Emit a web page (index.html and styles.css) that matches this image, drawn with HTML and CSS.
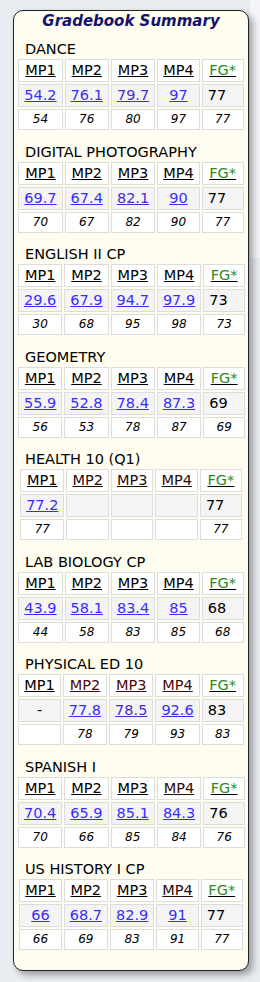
FILE: index.html
```html
<!DOCTYPE html>
<html>
<head>
<meta charset="utf-8">
<title>Gradebook Summary</title>
<link rel="stylesheet" href="styles.css">
</head>
<body>
<div class="card">
  <div class="title">Gradebook Summary</div>

  <div class="course">
    <div class="cname">DANCE</div>
    <table class="grades">
      <tr class="hdr"><td><a>MP1</a></td><td><a>MP2</a></td><td><a>MP3</a></td><td><a>MP4</a></td><td class="fgc"><a class="fg">FG*</a></td></tr>
      <tr class="pct"><td><a>54.2</a></td><td><a>76.1</a></td><td><a class="vis">79.7</a></td><td><a>97</a></td><td class="final">77</td></tr>
      <tr class="rnd"><td>54</td><td>76</td><td>80</td><td>97</td><td>77</td></tr>
    </table>
  </div>

  <div class="course">
    <div class="cname">DIGITAL PHOTOGRAPHY</div>
    <table class="grades">
      <tr class="hdr"><td><a>MP1</a></td><td><a>MP2</a></td><td><a>MP3</a></td><td><a>MP4</a></td><td class="fgc"><a class="fg">FG*</a></td></tr>
      <tr class="pct"><td><a>69.7</a></td><td><a>67.4</a></td><td><a class="vis">82.1</a></td><td><a>90</a></td><td class="final">77</td></tr>
      <tr class="rnd"><td>70</td><td>67</td><td>82</td><td>90</td><td>77</td></tr>
    </table>
  </div>

  <div class="course">
    <div class="cname">ENGLISH II CP</div>
    <table class="grades">
      <tr class="hdr"><td><a>MP1</a></td><td><a>MP2</a></td><td><a>MP3</a></td><td><a>MP4</a></td><td class="fgc"><a class="fg">FG*</a></td></tr>
      <tr class="pct"><td><a>29.6</a></td><td><a>67.9</a></td><td><a>94.7</a></td><td><a>97.9</a></td><td class="final">73</td></tr>
      <tr class="rnd"><td>30</td><td>68</td><td>95</td><td>98</td><td>73</td></tr>
    </table>
  </div>

  <div class="course">
    <div class="cname">GEOMETRY</div>
    <table class="grades">
      <tr class="hdr"><td><a>MP1</a></td><td><a>MP2</a></td><td><a>MP3</a></td><td><a>MP4</a></td><td class="fgc"><a class="fg">FG*</a></td></tr>
      <tr class="pct"><td><a>55.9</a></td><td><a>52.8</a></td><td><a>78.4</a></td><td><a>87.3</a></td><td class="final">69</td></tr>
      <tr class="rnd"><td>56</td><td>53</td><td>78</td><td>87</td><td>69</td></tr>
    </table>
  </div>

  <div class="course">
    <div class="cname">HEALTH 10 (Q1)</div>
    <table class="grades">
      <tr class="hdr"><td><a>MP1</a></td><td><a class="dim">MP2</a></td><td><a class="dim">MP3</a></td><td><a class="dim">MP4</a></td><td class="fgc"><a class="fg">FG*</a></td></tr>
      <tr class="pct"><td><a>77.2</a></td><td></td><td></td><td></td><td class="final">77</td></tr>
      <tr class="rnd"><td>77</td><td></td><td></td><td></td><td>77</td></tr>
    </table>
  </div>

  <div class="course">
    <div class="cname">LAB BIOLOGY CP</div>
    <table class="grades">
      <tr class="hdr"><td><a>MP1</a></td><td><a>MP2</a></td><td><a>MP3</a></td><td><a>MP4</a></td><td class="fgc"><a class="fg">FG*</a></td></tr>
      <tr class="pct"><td><a>43.9</a></td><td><a>58.1</a></td><td><a>83.4</a></td><td><a>85</a></td><td class="final">68</td></tr>
      <tr class="rnd"><td>44</td><td>58</td><td>83</td><td>85</td><td>68</td></tr>
    </table>
  </div>

  <div class="course">
    <div class="cname">PHYSICAL ED 10</div>
    <table class="grades">
      <tr class="hdr"><td><a>MP1</a></td><td><a class="red">MP2</a></td><td><a class="red">MP3</a></td><td><a class="red">MP4</a></td><td class="fgc"><a class="fg">FG*</a></td></tr>
      <tr class="pct"><td>-</td><td><a>77.8</a></td><td><a class="vis">78.5</a></td><td><a>92.6</a></td><td class="final">83</td></tr>
      <tr class="rnd"><td></td><td>78</td><td>79</td><td>93</td><td>83</td></tr>
    </table>
  </div>

  <div class="course">
    <div class="cname">SPANISH I</div>
    <table class="grades">
      <tr class="hdr"><td><a>MP1</a></td><td><a>MP2</a></td><td><a>MP3</a></td><td><a class="dim">MP4</a></td><td class="fgc"><a class="fg">FG*</a></td></tr>
      <tr class="pct"><td><a>70.4</a></td><td><a>65.9</a></td><td><a>85.1</a></td><td><a>84.3</a></td><td class="final">76</td></tr>
      <tr class="rnd"><td>70</td><td>66</td><td>85</td><td>84</td><td>76</td></tr>
    </table>
  </div>

  <div class="course">
    <div class="cname">US HISTORY I CP</div>
    <table class="grades">
      <tr class="hdr"><td><a>MP1</a></td><td><a>MP2</a></td><td><a>MP3</a></td><td><a class="dim">MP4</a></td><td class="fgc"><a class="fg">FG*</a></td></tr>
      <tr class="pct"><td><a>66</a></td><td><a>68.7</a></td><td><a>82.9</a></td><td><a>91</a></td><td class="final">77</td></tr>
      <tr class="rnd"><td>66</td><td>69</td><td>83</td><td>91</td><td>77</td></tr>
    </table>
  </div>
</div>
</body>
</html>
```
FILE: styles.css
```css
html, body {
  margin: 0;
  padding: 0;
}
body {
  background-color: #e9ecf1;
  background-image: linear-gradient(#f4f5f8, #f4f5f8);
  background-repeat: no-repeat;
  background-position: 250px 0;
  background-size: 10px 258px;
  font-family: "DejaVu Sans", Verdana, sans-serif;
  color: #000;
  min-height: 982px;
  padding-top: 10px;
  box-sizing: border-box;
}
.card {
  margin-left: 13px;
  width: 230px;
  border: 1px solid #222;
  border-radius: 10px;
  background: #fffdf0;
  box-shadow: 4px 4px 7px rgba(0, 0, 0, 0.35);
  padding: 1px 2px 18px 2px;
}
.title {
  text-align: center;
  font-weight: bold;
  font-style: italic;
  font-size: 15px;
  line-height: 18px;
  color: #14146b;
  margin-bottom: 11px;
}
.course {
  margin-bottom: 11.5px;
}
.course:last-child {
  margin-bottom: 0;
}
.cname {
  font-size: 14.5px;
  line-height: 16px;
  padding-left: 9px;
  white-space: nowrap;
}
.grades {
  margin: 0 auto;
  border-collapse: separate;
  border-spacing: 2px;
}
.grades td {
  border: 1px solid #dcdcdc;
  text-align: center;
  white-space: nowrap;
}
.hdr td,
.pct td {
  font-size: 14.5px;
  line-height: 17px;
  padding: 2px 5px;
  background: #fff;
}
.hdr td.fgc {
  min-width: 30px;
}
.pct td {
  background: #f4f4f4;
}
.pct td.final {
  text-align: left;
  padding-left: 5px;
}
.rnd td {
  font-size: 12px;
  font-style: italic;
  line-height: 15px;
  padding: 2px 5px;
  background: #fff;
}
.grades a {
  text-decoration: underline;
  color: #3a2cff;
}
.grades a.vis {
  color: #4a2ad8;
}
.hdr a {
  color: #000;
}
.hdr a.dim {
  color: #2a0a0a;
}
.hdr a.red {
  color: #4a0808;
}
.hdr a.fg {
  color: #2c8a1c;
  text-decoration-color: #000;
}
```
